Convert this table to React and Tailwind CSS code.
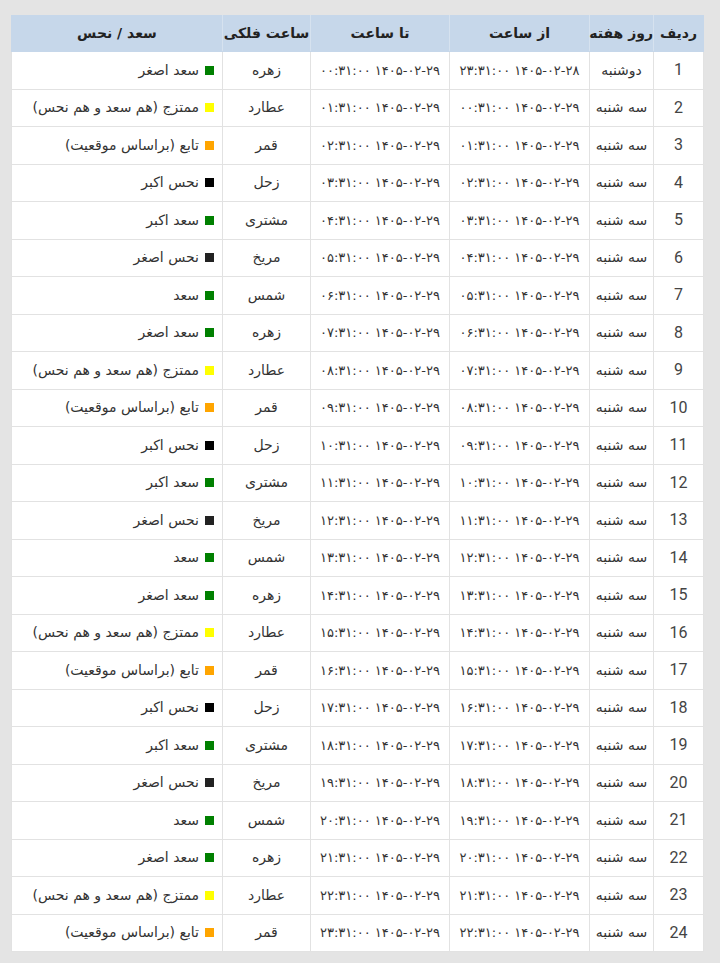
import React from "react";

const toFa = (s) => String(s).replace(/\d/g, (d) => "۰۱۲۳۴۵۶۷۸۹"[d]);
const pad = (n) => (n < 10 ? "0" + n : "" + n);

const planets = [
  { p: "زهره", s: "سعد اصغر", c: "bg-[#008000]" },
  { p: "عطارد", s: "ممتزج (هم سعد و هم نحس)", c: "bg-[#ffff00]" },
  { p: "قمر", s: "تابع (براساس موقعیت)", c: "bg-[#ffa500]" },
  { p: "زحل", s: "نحس اکبر", c: "bg-[#000000]" },
  { p: "مشتری", s: "سعد اکبر", c: "bg-[#008000]" },
  { p: "مریخ", s: "نحس اصغر", c: "bg-[#222222]" },
  { p: "شمس", s: "سعد", c: "bg-[#008000]" },
];

const rows = Array.from({ length: 24 }, (_, k) => {
  const i = k + 1;
  const fromH = (i + 22) % 24;
  const fromD = i === 1 ? "28" : "29";
  const toH = i - 1;
  return {
    i,
    day: i === 1 ? "دوشنبه" : "سه شنبه",
    from: toFa(`1405-02-${fromD} ${pad(fromH)}:31:00`),
    to: toFa(`1405-02-29 ${pad(toH)}:31:00`),
    ...planets[k % 7],
  };
});

export default function App() {
  return (
    <div className="min-h-[963px] w-[720px] bg-[#e4e4e4] pt-[15px] pl-[11px] font-['DejaVu_Sans',sans-serif]">
      <table dir="rtl" className="w-[693px] table-fixed border-collapse bg-white text-[14px] text-[#333]">
        <colgroup>
          <col className="w-[50px]" />
          <col className="w-[64px]" />
          <col className="w-[140px]" />
          <col className="w-[139px]" />
          <col className="w-[88px]" />
          <col />
        </colgroup>
        <thead>
          <tr className="h-[36px] bg-[#c6d7ea] text-[14px] text-[#222] whitespace-nowrap">
            <th className="border border-[#c6d7ea] border-l-[#d6e2ef] font-bold">ردیف</th>
            <th className="border border-[#c6d7ea] border-l-[#d6e2ef] font-bold">روز هفته</th>
            <th className="border border-[#c6d7ea] border-l-[#d6e2ef] font-bold">از ساعت</th>
            <th className="border border-[#c6d7ea] border-l-[#d6e2ef] font-bold">تا ساعت</th>
            <th className="border border-[#c6d7ea] border-l-[#d6e2ef] font-bold">ساعت فلکی</th>
            <th className="border border-[#c6d7ea] font-bold">سعد / نحس</th>
          </tr>
        </thead>
        <tbody>
          {rows.map((r) => (
            <tr key={r.i} className="h-[37.5px]">
              <td className="border border-[#e2e2e2] text-center font-['Roboto',sans-serif] text-[16px] text-[#444]">{r.i}</td>
              <td className="border border-[#e2e2e2] text-center whitespace-nowrap">{r.day}</td>
              <td className="border border-[#e2e2e2] text-center whitespace-nowrap text-[13px]">{r.from}</td>
              <td className="border border-[#e2e2e2] text-center whitespace-nowrap text-[13px]">{r.to}</td>
              <td className="border border-[#e2e2e2] text-center">{r.p}</td>
              <td className="border border-[#e2e2e2] pr-[8px] whitespace-nowrap">
                <span className="inline-flex items-center gap-[6px]">
                  <span className={`inline-block h-[9px] w-[9px] ${r.c}`}></span>
                  <span>{r.s}</span>
                </span>
              </td>
            </tr>
          ))}
        </tbody>
      </table>
    </div>
  );
}
